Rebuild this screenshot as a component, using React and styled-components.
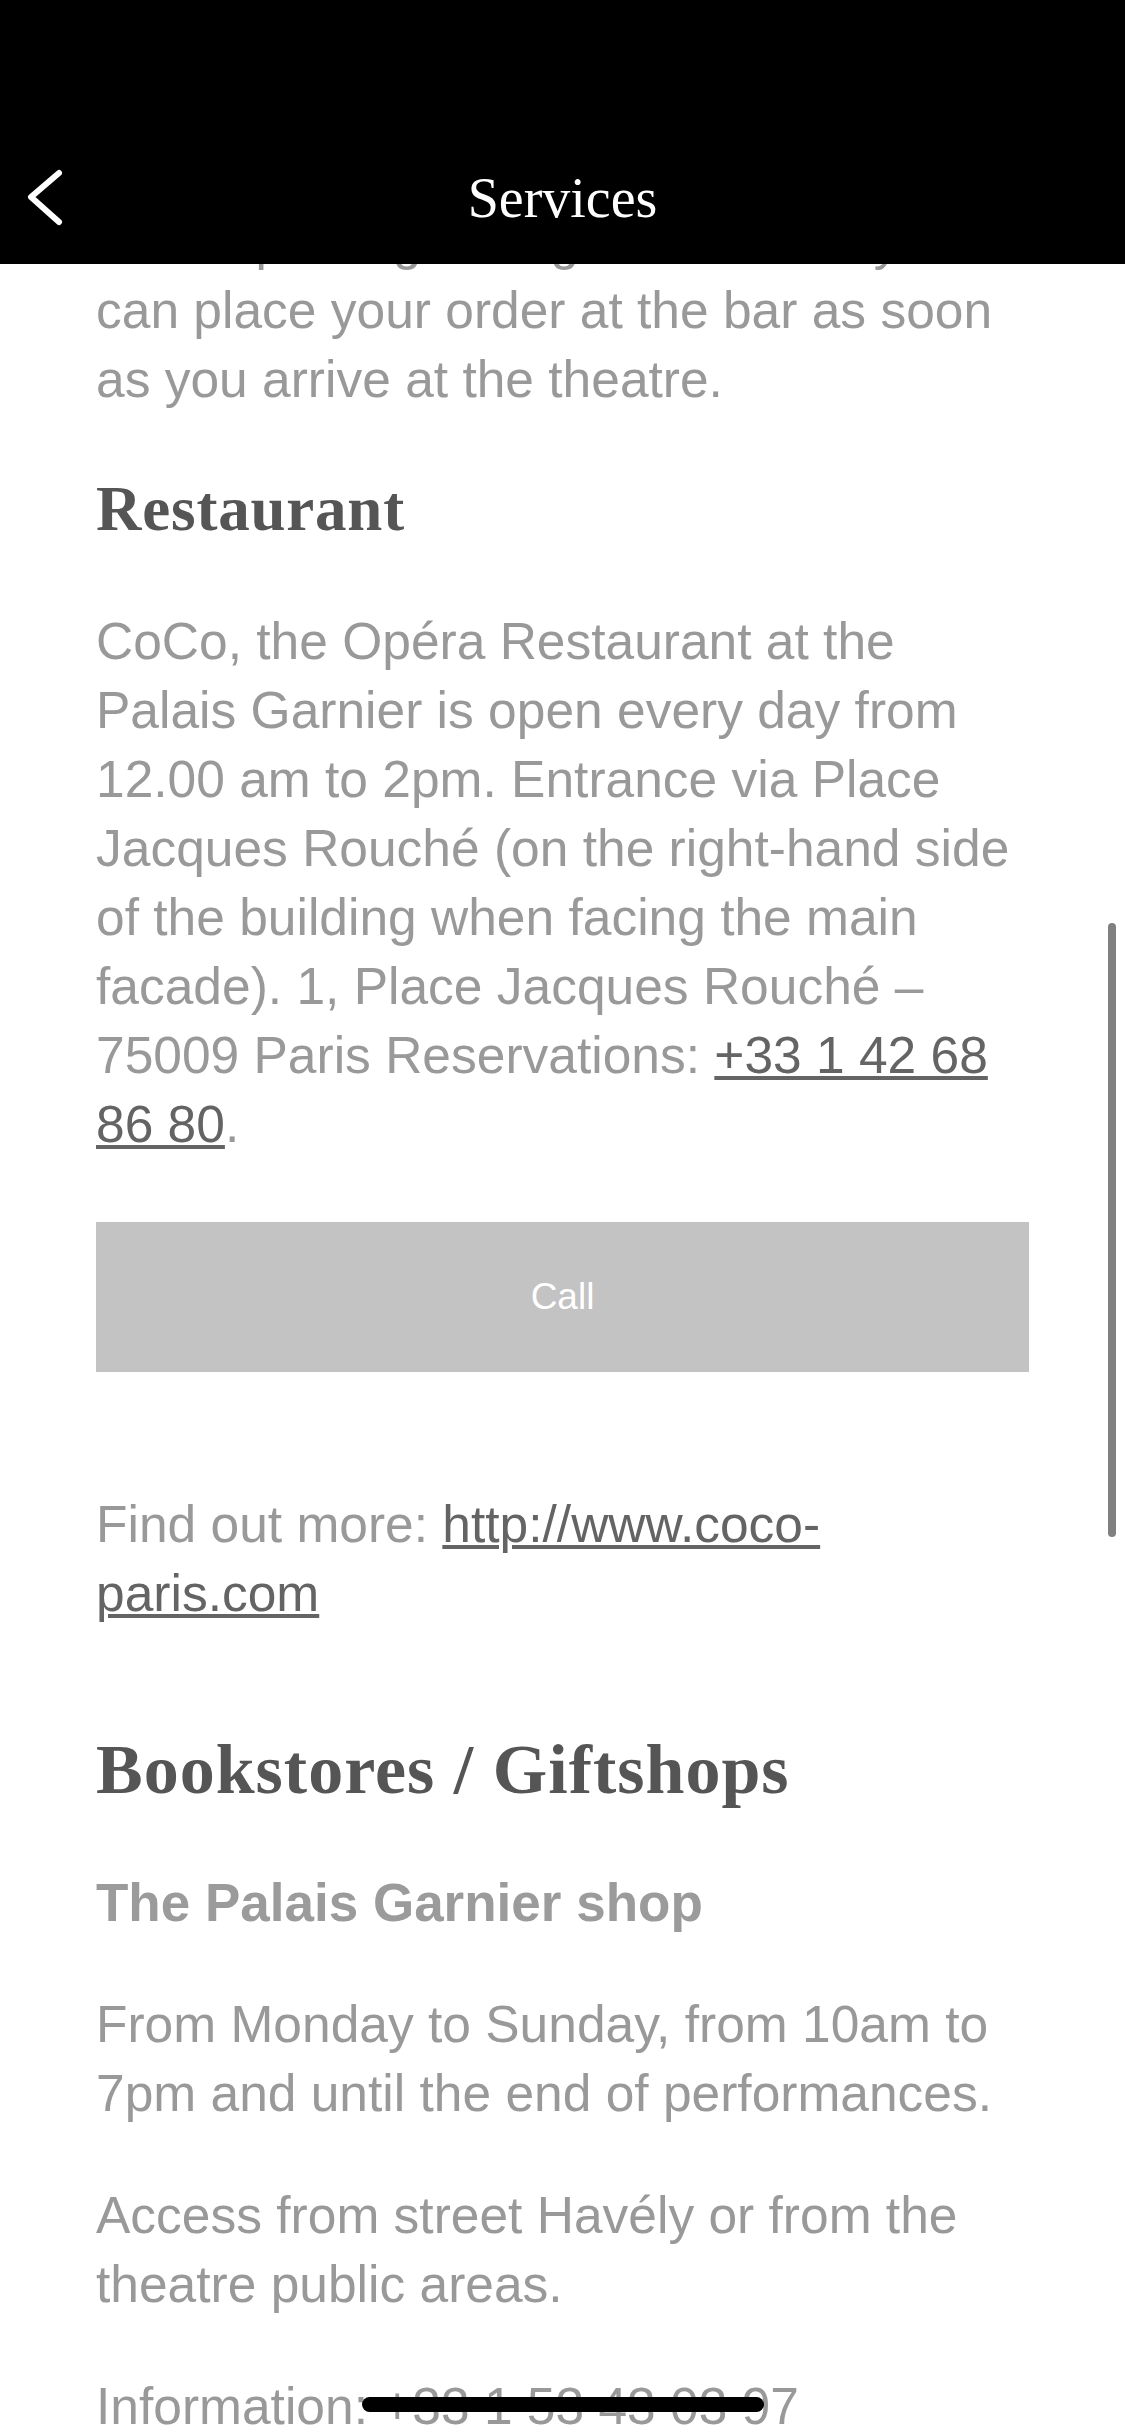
import React, { useLayoutEffect, useRef } from 'react';
import styled, { createGlobalStyle } from 'styled-components';

const GlobalStyle = createGlobalStyle`
  html, body {
    margin: 0;
    padding: 0;
    background: #fff;
  }
  body {
    font-family: "Liberation Sans", Arial, sans-serif;
  }
`;

const Screen = styled.div`
  display: flex;
  flex-direction: column;
  width: 1125px;
  height: 2436px;
  overflow: hidden;
  background: #fff;
`;

const Header = styled.header`
  flex: 0 0 264px;
  background: #000;
  display: flex;
  flex-direction: column;
  justify-content: flex-end;
`;

const NavBar = styled.nav`
  height: 132px;
  display: grid;
  grid-template-columns: 1fr auto 1fr;
  align-items: center;
`;

const BackButton = styled.button`
  justify-self: start;
  display: flex;
  margin-left: 24px;
  padding: 0;
  border: 0;
  background: none;
  cursor: pointer;
`;

const Title = styled.h1`
  margin: 0;
  font-family: "Liberation Serif", "Times New Roman", serif;
  font-weight: 400;
  font-size: 56px;
  line-height: 62px;
  color: #fff;
`;

const Viewport = styled.main`
  flex: 1;
  min-height: 0;
  position: relative;
`;

const Scroller = styled.div`
  position: relative;
  height: 100%;
  overflow-y: auto;
  scrollbar-width: none;
  &::-webkit-scrollbar {
    display: none;
  }
`;

const Article = styled.article`
  padding: 0 96px 300px;
  color: #999;
  font-size: 51.5px;
  line-height: 69px;
`;

const SectionTitle = styled.h2`
  margin: 100px 0 0;
  font-family: "Liberation Serif", "Times New Roman", serif;
  font-weight: 700;
  font-size: 70px;
  line-height: 84px;
  letter-spacing: 1px;
  color: #555;
`;

const SubTitle = styled.h3`
  margin: 57px 0 60px;
  font-family: "Liberation Serif", "Times New Roman", serif;
  font-weight: 700;
  font-size: 63px;
  line-height: 76px;
  letter-spacing: 0.8px;
  color: #555;
`;

const ShopTitle = styled.h4`
  margin: 59px 0 55px;
  font-weight: 700;
  font-size: 53px;
  line-height: 64px;
  color: #9b9b9b;
`;

const Text = styled.p`
  margin: 0;
  & + & {
    margin-top: 53px;
  }
`;

const Link = styled.a`
  color: #646464;
  text-decoration: underline;
  text-decoration-thickness: 4px;
  text-underline-offset: 3px;
`;

const CallButton = styled.button`
  display: block;
  width: 100%;
  height: 150px;
  margin: 63px 0 118px;
  border: 0;
  background: #c3c3c3;
  color: #fff;
  font-family: "Liberation Sans", Arial, sans-serif;
  font-size: 37px;
  cursor: pointer;
`;

const ScrollThumb = styled.div`
  position: absolute;
  top: 659px;
  right: 9px;
  width: 8px;
  height: 614px;
  border-radius: 4px;
  background: #808080;
`;

const HomeIndicator = styled.div`
  position: absolute;
  bottom: 24px;
  left: 50%;
  width: 402px;
  height: 15px;
  margin-left: -201px;
  border-radius: 8px;
  background: #000;
`;

function ChevronLeft() {
  return (
    <svg width="40" height="60" viewBox="0 0 40 60" fill="none">
      <polyline
        points="35,5 7,29 35,54"
        stroke="#fff"
        strokeWidth="6"
        strokeLinecap="round"
        strokeLinejoin="round"
      />
    </svg>
  );
}

export default function App() {
  const scroller = useRef(null);
  const anchor = useRef(null);

  useLayoutEffect(() => {
    // page is captured scrolled a little way down
    scroller.current.scrollTop = anchor.current.offsetTop + 57;
  }, []);

  return (
    <Screen>
      <GlobalStyle />
      <Header>
        <NavBar>
          <BackButton aria-label="Back">
            <ChevronLeft />
          </BackButton>
          <Title>Services</Title>
        </NavBar>
      </Header>
      <Viewport>
        <Scroller ref={scroller}>
          <Article>
            <Text ref={anchor}>
              Avoid queuing during the interval: you can place your order at the bar as soon as you
              arrive at the theatre.
            </Text>

            <SubTitle>Restaurant</SubTitle>
            <Text>
              CoCo, the Opéra Restaurant at the Palais Garnier is open every day from 12.00 am to
              2pm. Entrance via Place Jacques Rouché (on the right-hand side of the building when
              facing the main facade). 1, Place Jacques Rouché – 75009 Paris Reservations:{' '}
              <Link href="tel:+33142688680">+33 1 42 68 86 80</Link>.
            </Text>
            <CallButton>Call</CallButton>
            <Text>
              Find out more: <Link href="#coco">http://www.coco-paris.com</Link>
            </Text>

            <SectionTitle>Bookstores / Giftshops</SectionTitle>
            <ShopTitle>The Palais Garnier shop</ShopTitle>
            <Text>From Monday to Sunday, from 10am to 7pm and until the end of performances.</Text>
            <Text>Access from street Havély or from the theatre public areas.</Text>
            <Text>Information: +33 1 53 43 03 97</Text>
          </Article>
        </Scroller>
        <ScrollThumb />
        <HomeIndicator />
      </Viewport>
    </Screen>
  );
}
